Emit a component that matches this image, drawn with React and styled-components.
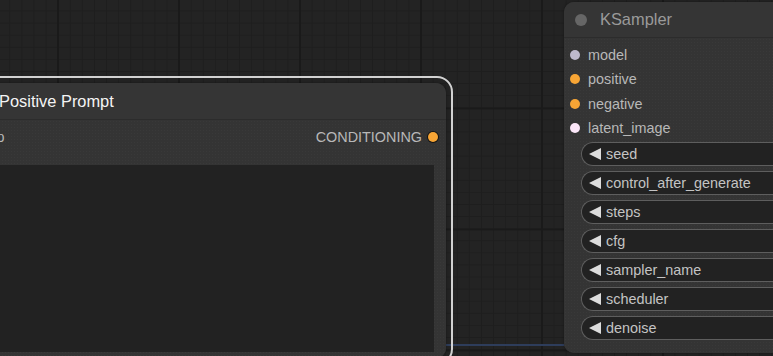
import React from "react";
import styled, { createGlobalStyle } from "styled-components";

const GlobalStyle = createGlobalStyle`
  html, body { margin: 0; padding: 0; background: #232323; overflow: hidden; }
  body { font-family: "Liberation Sans", Arial, sans-serif; }
`;

const Canvas = styled.div`
  position: relative;
  width: 773px;
  height: 356px;
  overflow: hidden;
  background-color: #232323;
  background-image:
    linear-gradient(to right, #1a1a1a 2px, transparent 2px),
    linear-gradient(to bottom, #1a1a1a 2px, transparent 2px),
    linear-gradient(to right, #1e1e1e 1px, transparent 1px),
    linear-gradient(to bottom, #1e1e1e 1px, transparent 1px);
  background-size: 121px 100%, 100% 121px, 12.1px 100%, 100% 12.1px;
  background-position: 57px 0, 0 107.5px, 9.3px 0, 0 10.5px;
`;

const LinkLayer = styled.svg`
  position: absolute;
  left: 0;
  top: 0;
  width: 773px;
  height: 356px;
  pointer-events: none;
`;

const Node = styled.div`
  position: absolute;
  left: ${(p) => p.$x}px;
  top: ${(p) => p.$y}px;
  width: ${(p) => p.$w}px;
  height: ${(p) => p.$h}px;
  display: flex;
  flex-direction: column;
  background-color: #353535;
  border-radius: 10px;
  box-shadow: 0 0 3px rgba(0, 0, 0, 0.35);
`;

const SelectionOutline = styled.div`
  position: absolute;
  inset: -7px;
  border: 2px solid #d2d2d2;
  border-radius: 16px;
  pointer-events: none;
`;

const TitleBar = styled.div`
  height: ${(p) => p.$h}px;
  flex: none;
  display: flex;
  align-items: center;
  gap: 13px;
  padding-left: ${(p) => p.$pad}px;
  box-sizing: border-box;
  border-bottom: 1px solid #2c2c2c;
  background: #353535;
  border-radius: 10px 10px 0 0;
`;

const TitleDot = styled.span`
  width: 12px;
  height: 12px;
  border-radius: 50%;
  background: #666;
  flex: none;
`;

const TitleText = styled.span`
  font-size: 16.4px;
  color: ${(p) => p.$color};
  white-space: nowrap;
`;

const Body = styled.div`
  flex: 1;
  display: flex;
  flex-direction: column;
  padding-top: 5px;
  min-height: 0;
  border-radius: 0 0 10px 10px;
  background-color: #343434;
  background-image: radial-gradient(rgba(255, 255, 255, 0.025) 0.8px, transparent 0.9px);
  background-size: 3px 3px;
`;

const SlotRow = styled.div`
  height: 24.3px;
  flex: none;
  display: flex;
  align-items: center;
  justify-content: space-between;
  padding: 0 ${(p) => p.$padR || 0}px 0 ${(p) => p.$padL || 0}px;
`;

const Slot = styled.div`
  display: flex;
  align-items: center;
  gap: ${(p) => p.$gap}px;
`;

const SlotDot = styled.span`
  width: 10px;
  height: 10px;
  border-radius: 50%;
  flex: none;
  background: ${(p) => p.$color};
  box-shadow: ${(p) => (p.$ring ? "0 0 0 1px #151515" : "none")};
`;

const SlotLabel = styled.span`
  font-size: 14.4px;
  color: #b8b8b8;
  white-space: nowrap;
`;

const TextArea = styled.div`
  flex: 1;
  margin: 16px 12px 6px 12px;
  background: #222;
`;

const WidgetList = styled.div`
  display: flex;
  flex-direction: column;
  gap: 5px;
  padding: 2px 0 0 17px;
`;

const Widget = styled.div`
  height: 24px;
  box-sizing: border-box;
  display: flex;
  align-items: center;
  gap: 5px;
  padding-left: 7px;
  background: #222;
  border: 1px solid #5e5e5e;
  border-right: none;
  border-radius: 12px 0 0 12px;
`;

const Arrow = styled.svg`
  width: 12px;
  height: 12px;
  flex: none;
`;

const WidgetLabel = styled.span`
  font-size: 14.4px;
  color: #c4c4c4;
  white-space: nowrap;
`;

const inputs = [
  { name: "model", color: "#bdb9cc" },
  { name: "positive", color: "#f7a535" },
  { name: "negative", color: "#f7a535" },
  { name: "latent_image", color: "#fbe6f8" },
];

const widgets = [
  "seed",
  "control_after_generate",
  "steps",
  "cfg",
  "sampler_name",
  "scheduler",
  "denoise",
];

export default function App() {
  return (
    <>
      <GlobalStyle />
      <Canvas>
        <LinkLayer viewBox="0 0 773 356">
          <line x1="380" y1="345" x2="620" y2="345" stroke="#2e3d5b" strokeWidth="2" />
        </LinkLayer>

        <Node $x={-35} $y={83} $w={481} $h={275}>
          <SelectionOutline />
          <TitleBar $h={37} $pad={34}>
            <TitleText $color="#f4f4f4">Positive Prompt</TitleText>
          </TitleBar>
          <Body>
            <SlotRow $padL={1} $padR={8}>
              <Slot $gap={7}>
                <SlotDot $color="#ffd500" />
                <SlotLabel>clip</SlotLabel>
              </Slot>
              <Slot $gap={6}>
                <SlotLabel>CONDITIONING</SlotLabel>
                <SlotDot $color="#f7a535" $ring />
              </Slot>
            </SlotRow>
            <TextArea />
          </Body>
        </Node>

        <Node $x={564} $y={2} $w={260} $h={351}>
          <TitleBar $h={36} $pad={11}>
            <TitleDot />
            <TitleText $color="#9a9a9a">KSampler</TitleText>
          </TitleBar>
          <Body>
            {inputs.map((s) => (
              <SlotRow key={s.name} $padL={6}>
                <Slot $gap={8}>
                  <SlotDot $color={s.color} />
                  <SlotLabel>{s.name}</SlotLabel>
                </Slot>
              </SlotRow>
            ))}
            <WidgetList>
              {widgets.map((w) => (
                <Widget key={w}>
                  <Arrow viewBox="0 0 12 12">
                    <polygon points="0,6 12,0 12,12" fill="#dcdcdc" />
                  </Arrow>
                  <WidgetLabel>{w}</WidgetLabel>
                </Widget>
              ))}
            </WidgetList>
          </Body>
        </Node>
      </Canvas>
    </>
  );
}
